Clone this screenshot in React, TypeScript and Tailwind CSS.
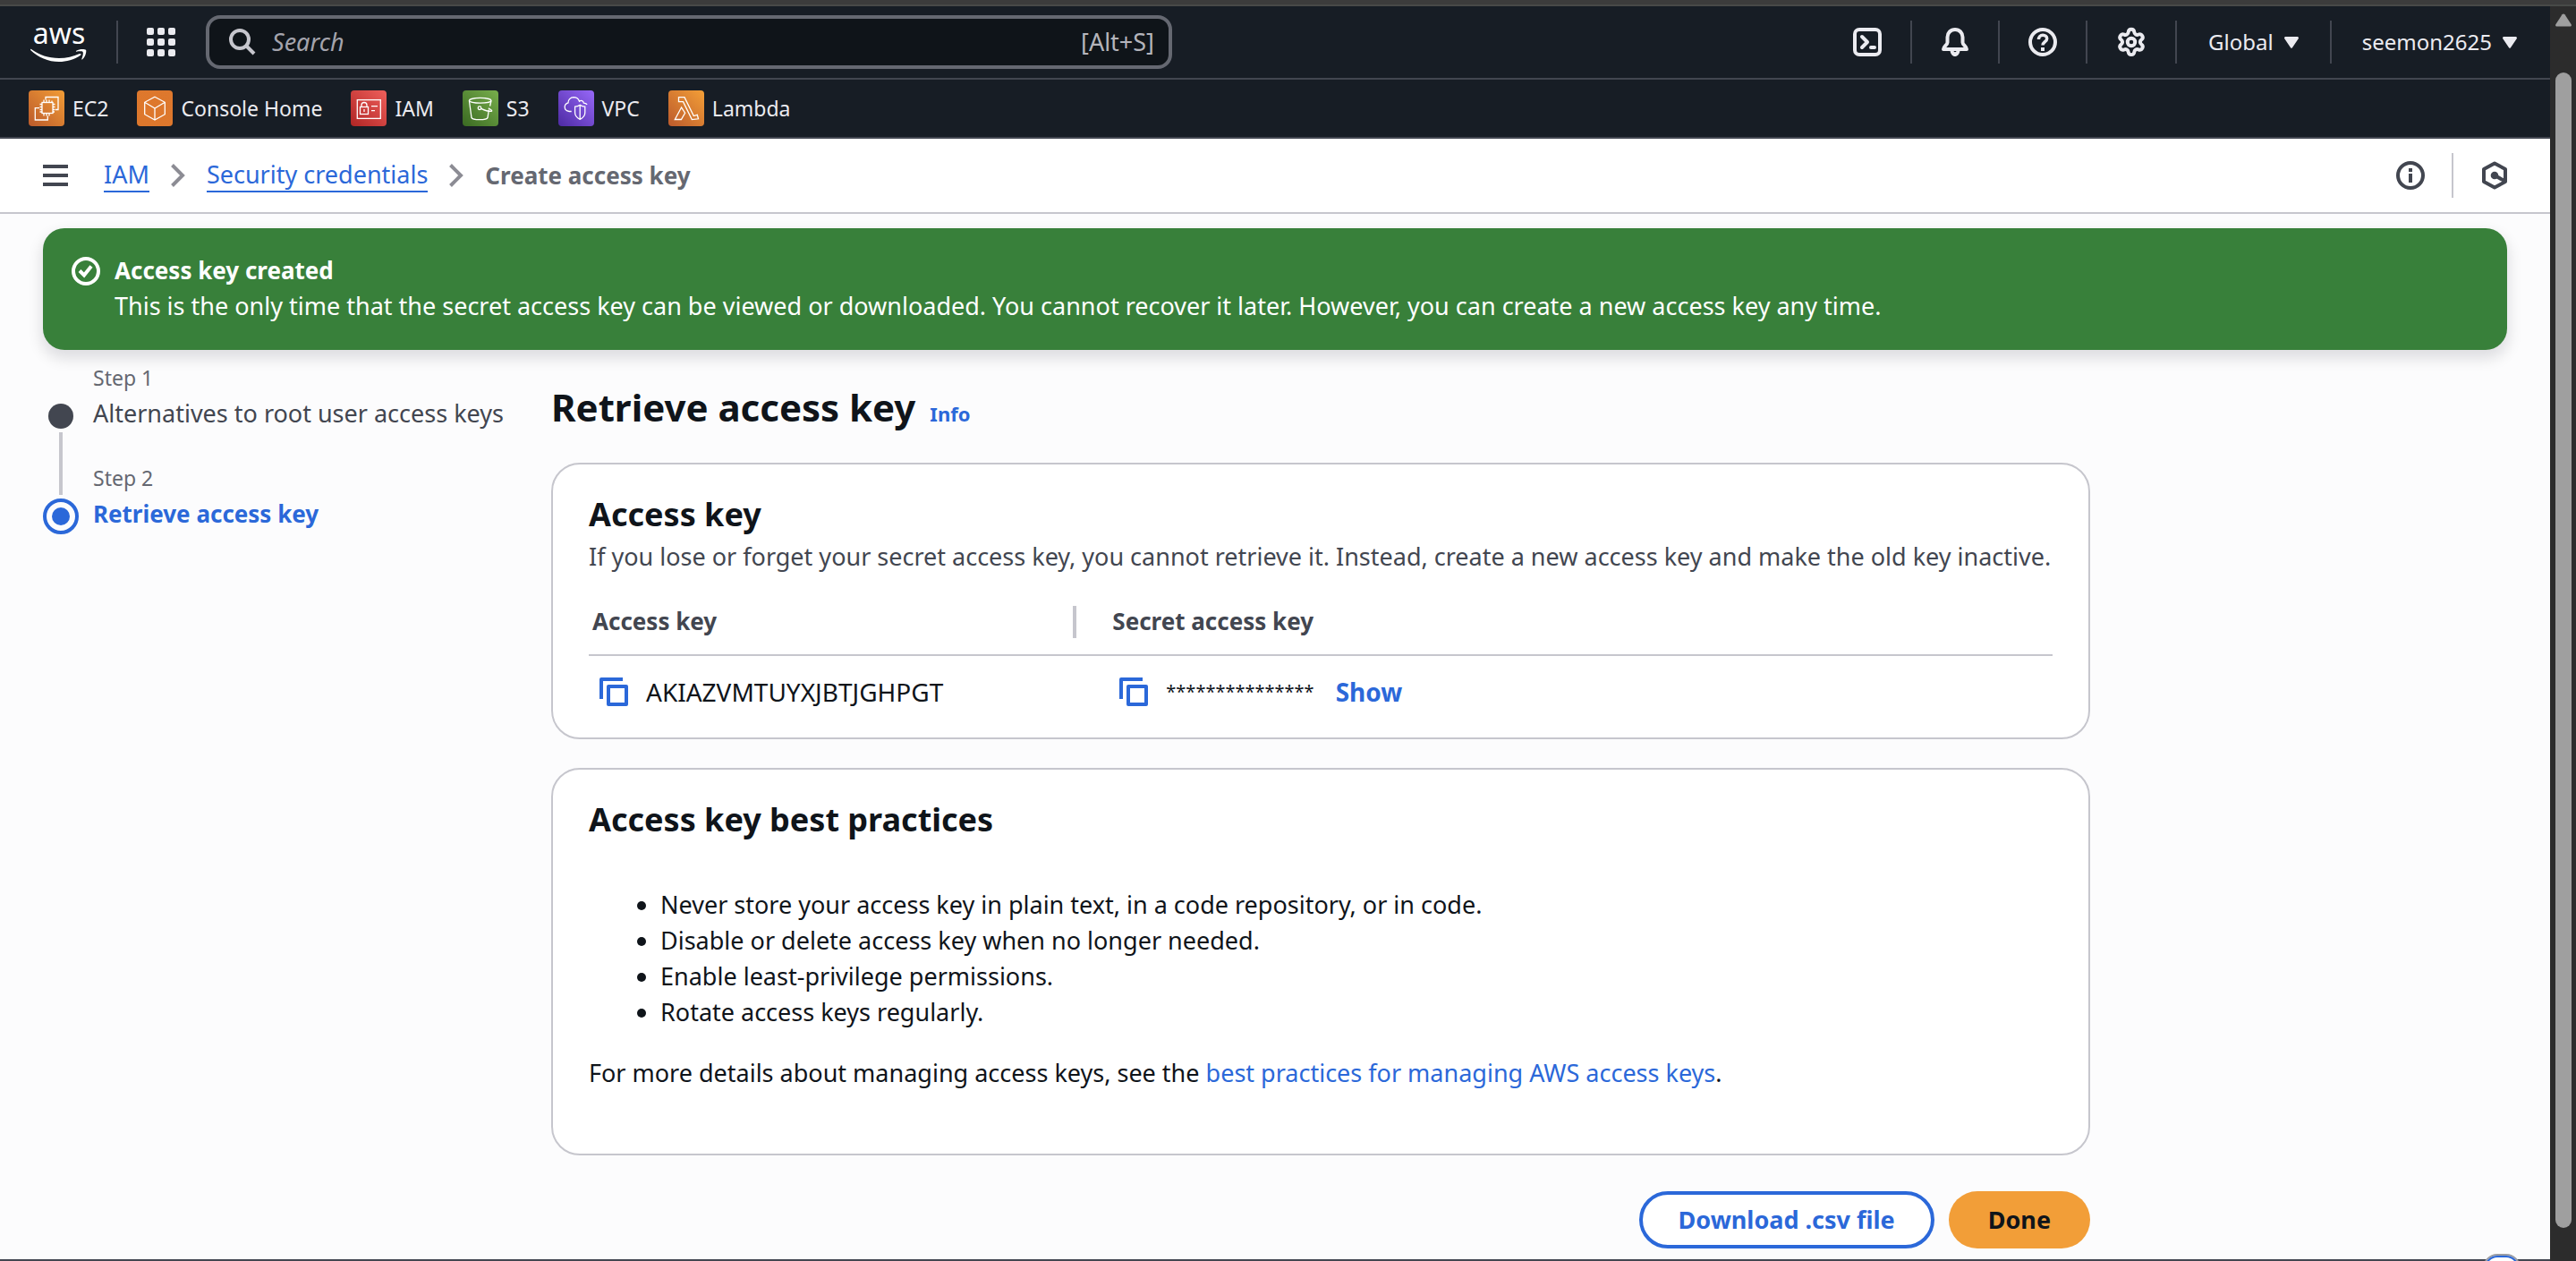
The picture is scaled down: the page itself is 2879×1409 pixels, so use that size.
import type { ReactNode } from "react";
import { Settings } from "lucide-react";

function AwsLogo() {
  return (
    <a href="#home" aria-label="AWS home" className="flex w-16 flex-col items-center text-white">
      <span className="text-[32px] leading-6">aws</span>
      <svg viewBox="0 0 64 16" className="mt-1 h-4 w-16 fill-current" aria-hidden="true">
        <path d="M1 2c9 6.500 19 10 31 10 8 0 16-2 23-5 1.300-.5 2.200.8 1 1.700C49 13.500 40 16 32 16 20 16 8.500 11 .4 3.200c-.8-.8-.2-1.700.6-1.200z" />
        <path d="M58.500 5c-.8-1-5-.6-7-.3-.7.1-.8-.5-.2-.9C54.800 1.300 61 1.800 62 2.800c.9 1-.2 7.600-3.800 10.500-.6.5-1.100.2-.9-.4.8-2 2.200-6.700 1.200-7.900z" />
      </svg>
    </a>
  );
}

function GridIcon() {
  return (
    <svg viewBox="0 0 32 32" className="size-8 fill-current" aria-hidden="true">
      {[0, 12, 24].map((y) =>
        [0, 12, 24].map((x) => <rect key={`${x}-${y}`} x={x} y={y} width="8" height="8" rx="2" />),
      )}
    </svg>
  );
}

function LineIcon({ children, className = "size-8" }: { children: ReactNode; className?: string }) {
  return (
    <svg viewBox="0 0 32 32" className={className} fill="none" stroke="currentColor" strokeWidth="4" aria-hidden="true">
      {children}
    </svg>
  );
}

function CopyIcon() {
  return (
    <LineIcon>
      <path d="M26 2H2v22" strokeLinejoin="round" />
      <rect x="10" y="10" width="20" height="20" strokeLinejoin="round" />
    </LineIcon>
  );
}

function Caret() {
  return (
    <svg viewBox="0 0 16 13" className="h-[13px] w-4 fill-current" aria-hidden="true">
      <path d="M1.500 0h13c1.200 0 1.800 1.200 1.200 2.200L8.800 12.400c-.4.600-1.200.6-1.600 0L.3 2.200C-.3 1.200.3 0 1.500 0z" />
    </svg>
  );
}

function Chevron() {
  return (
    <svg viewBox="0 0 16 26" className="h-[26px] w-4" fill="none" stroke="#8c8c94" strokeWidth="4" aria-hidden="true">
      <path d="M1.500 1.500 13 13 1.500 24.500" />
    </svg>
  );
}

function ServiceTile({ from, to, children }: { from: string; to: string; children: ReactNode }) {
  const id = `tile-${from.slice(1)}-${to.slice(1)}`;
  return (
    <svg viewBox="0 0 40 40" className="size-10 rounded" aria-hidden="true">
      <defs>
        <linearGradient id={id} x1="0" y1="1" x2="1" y2="0">
          <stop offset="0" stopColor={from} />
          <stop offset="1" stopColor={to} />
        </linearGradient>
      </defs>
      <rect width="40" height="40" fill={`url(#${id})`} />
      <g fill="none" stroke="#fff" strokeWidth="1.300">
        {children}
      </g>
    </svg>
  );
}

const services: { name: string; icon: ReactNode }[] = [
  {
    name: "EC2",
    icon: (
      <ServiceTile from="#bb5a2b" to="#f29d36">
        <rect x="15" y="13.500" width="12" height="12" />
        <path d="M17 10.500v3M20 10.500v3M23 10.500v3M26 11.500v2M17 25.500v3M20 25.500v3M23 25.500v3M12.500 15.500H15M12.500 18.500H15M12.500 21.500H15M12.500 24H15M27 15.500h2.500M27 18.500h2.500M27 21.500h2.500M27 24h2" />
        <path d="M19 10.500v-3h14v14h-3M12 19.700H7.300V33h14v-4.500" />
      </ServiceTile>
    ),
  },
  {
    name: "Console Home",
    icon: (
      <ServiceTile from="#dd772c" to="#de782d">
        <path d="M20 7.300l11.300 6v13.400L20 33 8.700 26.700V13.300zM8.700 13.300 20 20l11.300-6.700M20 20v13" />
      </ServiceTile>
    ),
  },
  {
    name: "IAM",
    icon: (
      <ServiceTile from="#b02524" to="#ee5f5b">
        <rect x="7.300" y="10.600" width="26" height="20.800" />
        <rect x="10.500" y="18.500" width="9" height="8" />
        <path d="M12 18.500v-2a3 3 0 0 1 6 0v2M15 21v3M23 17.700h7M23 22.700h4" />
      </ServiceTile>
    ),
  },
  {
    name: "S3",
    icon: (
      <ServiceTile from="#3a6a22" to="#78ae4c">
        <ellipse cx="19.700" cy="11.300" rx="12.300" ry="2.900" />
        <path d="M7.400 11.500 10 30.500c1 2.900 17 2.900 18 0l1.400-9M30.600 17.500l1.400-6" />
        <circle cx="19" cy="19.700" r="1.800" />
        <path d="M20.700 20.300c4 1.900 8.300 3.200 11.500 3.100 1.500-.3-.6-2.200-3.400-3.600" />
      </ServiceTile>
    ),
  },
  {
    name: "VPC",
    icon: (
      <ServiceTile from="#4d2aa3" to="#9768f8">
        <path d="M14.700 23.500h-2.500C9 23 7.200 21 7.200 18.500c0-2.300 1.500-4 3.800-4.700-.2-3 2.400-6 6-6.100 3 0 5.500 1.600 6.500 4.500 2-1.800 4.600-.6 4.900 2 1.600.1 2.900.7 3.800 1.600" />
        <path d="M24.200 16.200c1.700 1.300 3.500 1.900 5.600 2v6.500c0 3.600-2.200 6-5.600 7.600-3.400-1.600-5.600-4-5.600-7.600v-6.500c2.100-.1 3.900-.7 5.600-2zM24.200 16.200v16" />
      </ServiceTile>
    ),
  },
  {
    name: "Lambda",
    icon: (
      <ServiceTile from="#bc5a2c" to="#f39f37">
        <path d="M11.500 7.700H18l10.300 20.800 4-1.200 1.200 4.500-7.200.8L16.500 12.700h-5zM14.600 19l4 6.200-4.200 7.300H7.300z" />
      </ServiceTile>
    ),
  },
];

function Divider() {
  return <span className="h-12 w-0.5 bg-[#424650]" />;
}

function TopBar() {
  return (
    <header className="bg-[#171d25] text-[#ebebf0]">
      <div className="flex h-[82px] items-center border-b-2 border-[#424650] pr-[37px] pl-[34px]">
        <AwsLogo />
        <span className="mr-8 ml-8 h-12 w-0.5 bg-[#424650]" />
        <button aria-label="Services">
          <GridIcon />
        </button>
        <label className="ml-[34px] flex h-[60px] w-[1080px] items-center rounded-2xl border-4 border-[#656871] bg-[#0f1419] pr-4 pl-[22px]">
          <svg viewBox="0 0 30 30" className="size-[30px] text-[#c6c6cd]" fill="none" stroke="currentColor" strokeWidth="4" aria-hidden="true">
            <circle cx="12" cy="12" r="10" />
            <path d="m19 19 9 9" />
          </svg>
          <input
            type="search"
            aria-label="Search"
            placeholder="Search"
            className="ml-[18px] min-w-0 flex-1 bg-transparent text-[27px] outline-none placeholder:text-[#a4a4ad] placeholder:italic"
          />
          <span className="text-[27px] text-[#b4b4bb]">[Alt+S]</span>
        </label>
        <nav aria-label="Account" className="ml-auto flex items-center">
          <button aria-label="CloudShell" className="mr-8">
            <LineIcon>
              <rect x="2" y="2" width="28" height="28" rx="5" />
              <path d="m10 10 6 6-6 6" strokeLinecap="round" strokeLinejoin="round" />
              <path d="M20 22h4" strokeLinecap="round" />
            </LineIcon>
          </button>
          <Divider />
          <button aria-label="Notifications" className="mx-8">
            <LineIcon>
              <path d="M16 2c-5 0-8.500 3.800-8.500 8.500v6C7.500 19 3 21 3 24h26c0-3-4.500-5-4.500-7.500v-6C24.500 5.800 21 2 16 2z" strokeLinejoin="round" />
              <path d="M10.500 25.500c.5 4 2.700 6.500 5.500 6.500s5-2.500 5.500-6.500h-4c0 1-.5 1.700-1.500 1.700s-1.500-.7-1.500-1.700z" fill="currentColor" stroke="none" />
            </LineIcon>
          </button>
          <Divider />
          <button aria-label="Help" className="mx-8">
            <LineIcon>
              <circle cx="16" cy="16" r="14" />
              <path d="M11.500 13c0-2.700 1.800-4.800 4.600-4.800 2.700 0 4.600 1.700 4.600 4 0 3.200-4.700 3.700-4.700 7.300" strokeWidth="3.500" />
              <path d="M14 22h4v4h-4z" fill="currentColor" stroke="none" />
            </LineIcon>
          </button>
          <Divider />
          <button aria-label="Settings" className="mx-8">
            <Settings className="size-[34px]" strokeWidth={2.8} />
          </button>
          <Divider />
          <button className="mx-[35px] flex items-center gap-3 text-[24px]">
            Global <Caret />
          </button>
          <Divider />
          <button className="ml-[34px] flex items-center gap-3 text-[24px]">
            seemon2625 <Caret />
          </button>
        </nav>
      </div>
      <nav aria-label="Favorites" className="flex h-[66px] items-center gap-8 border-b-2 border-[#424650] px-8">
        {services.map((s) => (
          <a key={s.name} href={`#${s.name}`} className="flex items-center gap-[9px] text-[23px]">
            {s.icon}
            {s.name}
          </a>
        ))}
      </nav>
    </header>
  );
}

function Breadcrumbs() {
  return (
    <div className="flex h-[84px] items-center border-b-2 border-[#c6c6cd] bg-white pr-[46px] pl-12 text-[#424650]">
      <button aria-label="Open navigation">
        <svg viewBox="0 0 28 24" className="h-6 w-7 fill-current" aria-hidden="true">
          <path d="M0 0h28v4H0zM0 10h28v4H0zM0 20h28v4H0z" />
        </svg>
      </button>
      <nav aria-label="Breadcrumb" className="ml-10 flex items-center gap-6 text-[27px] leading-9">
        <a href="#iam" className="border-b-2 border-current text-[#2b68d9]">IAM</a>
        <Chevron />
        <a href="#security" className="border-b-2 border-current text-[#2b68d9]">Security credentials</a>
        <Chevron />
        <span className="text-[26px] font-bold text-[#656871]">Create access key</span>
      </nav>
      <div className="ml-auto flex items-center">
        <button aria-label="Info panel" className="mr-[30px]">
          <LineIcon>
            <circle cx="16" cy="16" r="14" />
            <path d="M14 8h4v4h-4zM14 14h4v10h-4z" fill="currentColor" stroke="none" />
          </LineIcon>
        </button>
        <span className="h-[50px] w-0.5 bg-[#c6c6cd]" />
        <button aria-label="Amazon Q" className="ml-[30px]">
          <LineIcon>
            <path d="M16 2.500 28 9v14l-12 6.500L4 23V9z" strokeLinejoin="round" />
            <path d="m16 16 11 6" />
            <circle cx="16" cy="16" r="4.300" fill="currentColor" stroke="none" />
          </LineIcon>
        </button>
      </div>
    </div>
  );
}

function SuccessBanner() {
  return (
    <div role="status" className="flex gap-4 rounded-3xl bg-[#38803a] px-8 pt-[27px] pb-[29px] text-white shadow-[0_8px_16px_2px_rgba(0,7,22,0.12)]">
      <LineIcon className="mt-[5px] size-8">
        <circle cx="16" cy="16" r="14" />
        <path d="m9 15.500 5 5 8-10" />
      </LineIcon>
      <div>
        <h2 className="text-[26px] leading-10 font-bold">Access key created</h2>
        <p className="text-[27px] leading-10">
          This is the only time that the secret access key can be viewed or downloaded. You cannot recover it later.
          However, you can create a new access key any time.
        </p>
      </div>
    </div>
  );
}

function Steps() {
  return (
    <nav aria-label="Steps" className="flex gap-4">
      <div className="flex w-10 flex-col items-center gap-1 pt-[49px]" aria-hidden="true">
        <span className="size-7 rounded-full bg-[#424650]" />
        <span className="h-[70px] w-1 bg-[#c6c6cd]" />
        <span className="flex size-10 items-center justify-center rounded-full border-4 border-[#2b68d9]">
          <span className="size-5 rounded-full bg-[#2b68d9]" />
        </span>
      </div>
      <ol className="flex flex-col gap-8 leading-10">
        <li>
          <div className="text-[23px] text-[#656871]">Step 1</div>
          <div className="text-[27px] text-[#424650]">Alternatives to root user access keys</div>
        </li>
        <li>
          <div className="text-[23px] text-[#656871]">Step 2</div>
          <div className="text-[26px] font-bold text-[#2b68d9]" aria-current="step">Retrieve access key</div>
        </li>
      </ol>
    </nav>
  );
}

function Card({ children, className }: { children: ReactNode; className: string }) {
  return <section className={`rounded-[32px] border-2 border-[#c6c6cd] bg-white px-10 pt-[31px] ${className}`}>{children}</section>;
}

function AccessKeyCard() {
  return (
    <Card className="pb-3">
      <h2 className="text-[36px] leading-[50px] font-bold">Access key</h2>
      <p className="mt-0.5 text-[27px] leading-10 text-[#424650]">
        If you lose or forget your secret access key, you cannot retrieve it. Instead, create a new access key and make
        the old key inactive.
      </p>
      <table className="mt-4 w-full table-fixed text-left">
        <thead>
          <tr className="h-[74px] border-b-2 border-[#c6c6cd] text-[26px] text-[#424650]">
            <th scope="col" className="w-1/3 pl-1">
              <div className="flex h-9 items-center border-r-4 border-[#c6c6cd]">Access key</div>
            </th>
            <th scope="col" className="pl-10">Secret access key</th>
          </tr>
        </thead>
        <tbody>
          <tr className="h-20 text-[28px]">
            <td className="pl-3">
              <div className="flex items-center gap-5">
                <button aria-label="Copy access key" className="text-[#2b68d9]"><CopyIcon /></button>
                AKIAZVMTUYXJBTJGHPGT
              </div>
            </td>
            <td className="pl-12">
              <div className="flex items-center gap-5">
                <button aria-label="Copy secret access key" className="text-[#2b68d9]"><CopyIcon /></button>
                <span className="text-[20px]">***************</span>
                <button className="ml-1 font-bold text-[#2b68d9]">Show</button>
              </div>
            </td>
          </tr>
        </tbody>
      </table>
    </Card>
  );
}

function BestPracticesCard() {
  return (
    <Card className="mt-8 pb-[70px]">
      <h2 className="text-[36px] leading-[50px] font-bold">Access key best practices</h2>
      <ul className="mt-[50px] list-disc pl-20 text-[27px] leading-10">
        <li>Never store your access key in plain text, in a code repository, or in code.</li>
        <li>Disable or delete access key when no longer needed.</li>
        <li>Enable least-privilege permissions.</li>
        <li>Rotate access keys regularly.</li>
      </ul>
      <p className="mt-7 text-[27px] leading-10">
        For more details about managing access keys, see the{" "}
        <a href="#best-practices" className="text-[#2b68d9]">best practices for managing AWS access keys</a>.
      </p>
    </Card>
  );
}

function ScrollTrack() {
  return (
    <div className="flex w-[29px] shrink-0 flex-col items-center bg-[#2c2c2c] pt-2" aria-hidden="true">
      <svg viewBox="0 0 18 15" className="h-[15px] w-[18px] fill-[#9f9f9f]">
        <path d="M7.500 1.200c.8-1 2.200-1 3 0l7 10.800c.9 1.400.2 2.500-1.200 2.500H1.700c-1.400 0-2.100-1.100-1.200-2.500z" />
      </svg>
      <span className="mt-[51px] mb-[37px] w-[18px] flex-1 rounded-full bg-[#9f9f9f]" />
    </div>
  );
}

export default function App() {
  return (
    <div className="relative flex h-screen flex-col overflow-hidden bg-[#fcfcfd] font-['Noto_Sans',sans-serif] text-[#0f141a]">
      <div className="h-[7px] shrink-0 border-b-2 border-[#484a48] bg-[#3c3c3c]" />
      <div className="flex min-h-0 flex-1">
        <div className="flex min-w-0 flex-1 flex-col overflow-hidden">
          <TopBar />
          <Breadcrumbs />
          <main className="min-h-0 flex-1 overflow-hidden px-12 pt-4">
            <SuccessBanner />
            <div className="grid grid-cols-[528px_minmax(0,1720px)] gap-10 pt-[11px]">
              <Steps />
              <div className="pt-[23px]">
                <h1 className="mb-8 flex items-baseline gap-4 text-[42px] leading-[60px] font-bold">
                  Retrieve access key
                  <a href="#info" className="text-[22px] leading-none text-[#2b68d9]">Info</a>
                </h1>
                <AccessKeyCard />
                <BestPracticesCard />
                <div className="mt-10 flex justify-end gap-4 text-[27px] font-bold">
                  <button className="h-16 rounded-full border-4 border-[#2b68d9] bg-white px-10 text-[#2b68d9]">
                    Download .csv file
                  </button>
                  <button className="h-16 rounded-full bg-[#f29e38] px-11">Done</button>
                </div>
              </div>
            </div>
          </main>
          <div className="h-0.5 shrink-0 bg-[#424650]" />
        </div>
        <ScrollTrack />
      </div>
      <button
        aria-label="Feedback"
        className="absolute right-[62px] -bottom-[34px] size-[42px] rounded-2xl border-2 border-[#9a9ca3] bg-white p-0"
      >
        <span className="block size-full rounded-[14px] border-2 border-[#2b68d9]" />
      </button>
    </div>
  );
}
